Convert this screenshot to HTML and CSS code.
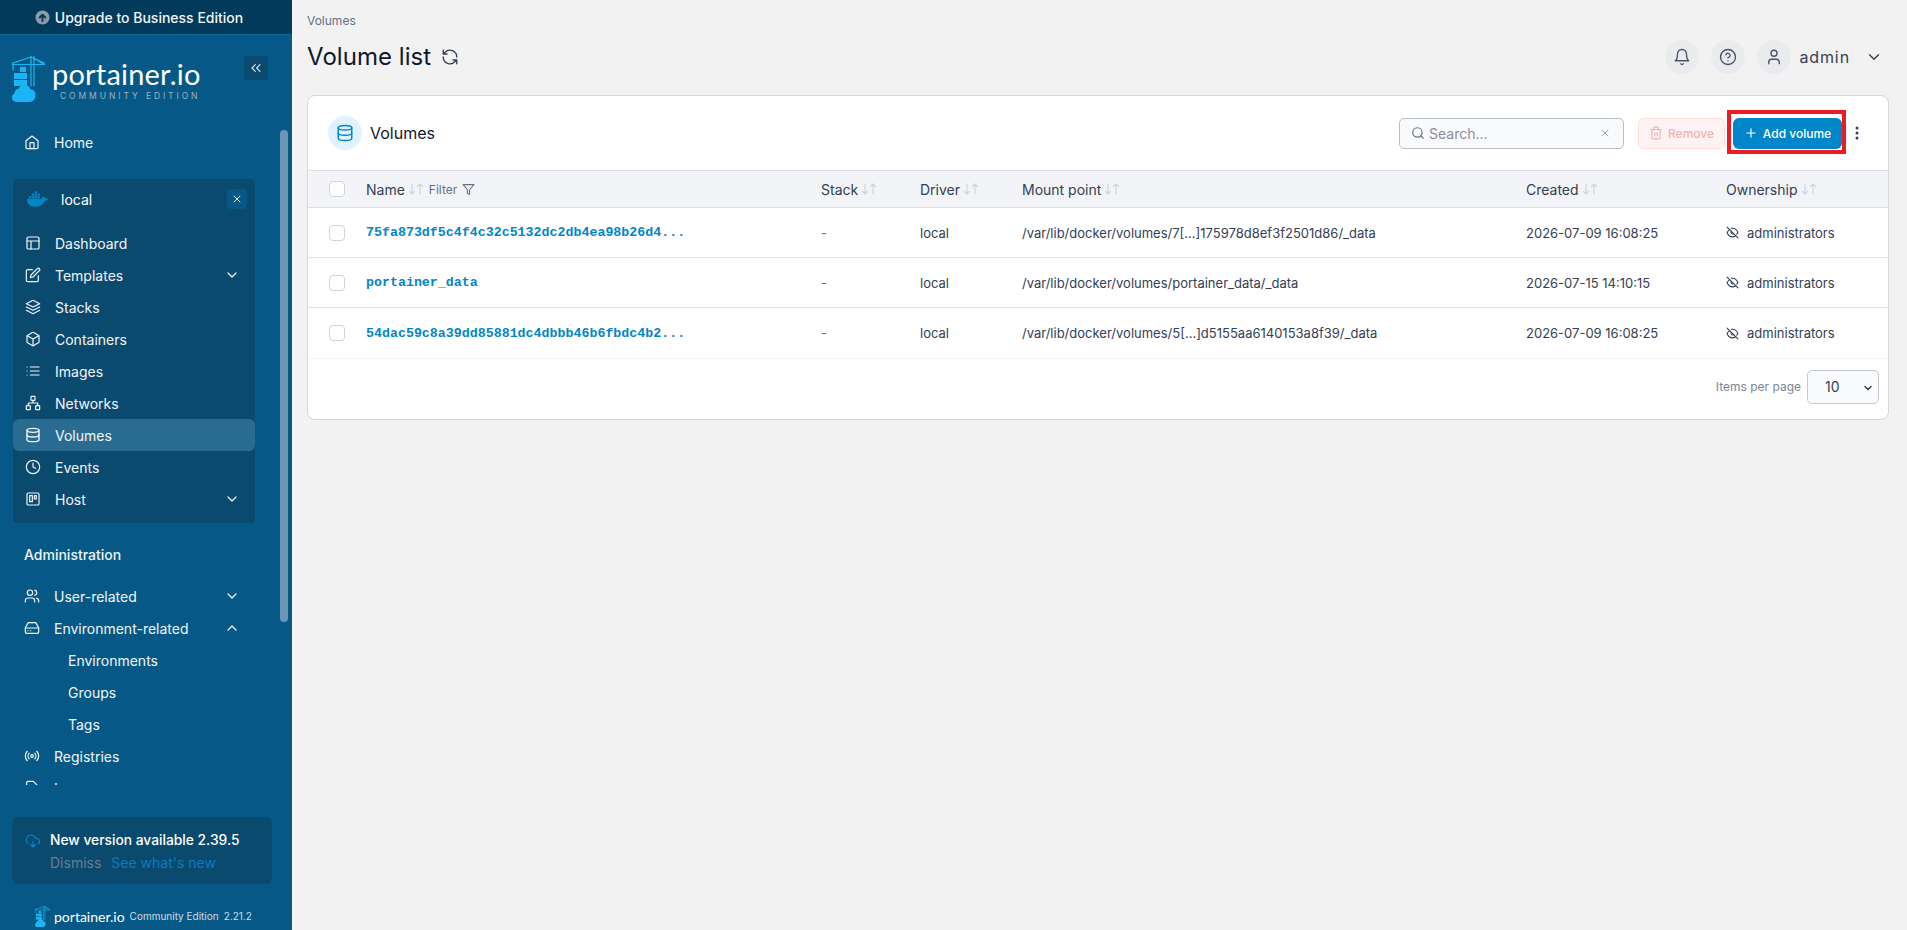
FILE: index.html
```html
<!DOCTYPE html>
<html lang="en">
<head>
<meta charset="utf-8">
<title>Volume list</title>
<link rel="stylesheet" href="styles.css">
</head>
<body>
<svg class="defs" width="0" height="0">
  <symbol id="i-db" viewBox="0 0 24 24"><ellipse cx="12" cy="5" rx="9" ry="3"/><path d="M3 5v14c0 1.7 4 3 9 3s9-1.300 9-3V5"/><path d="M3 12c0 1.700 4 3 9 3s9-1.300 9-3"/></symbol>
  <symbol id="i-eye" viewBox="0 0 24 24"><path d="M9.900 4.200A10 10 0 0 1 12 4c7 0 10 8 10 8a18 18 0 0 1-2.200 3.200"/><path d="M6.600 6.600C3.500 8.700 2 12 2 12s3 8 10 8a10 10 0 0 0 5.400-1.600"/><path d="M9.900 9.900a3 3 0 0 0 4.200 4.200"/><path d="m2 2 20 20"/></symbol>
  <symbol id="i-sort" viewBox="0 0 16 12"><path class="sort-line" d="M4 1v10M1.500 8.500 4 11l2.500-2.500M12 11V1M9.500 3.500 12 1l2.500 2.500"/></symbol>
  <symbol id="i-crane" viewBox="0 0 33 46"><path class="logo-line" d="M0 8.500h33M0 7.500 19 1l14 6.500M19 0v30M22 0v30M22 2l9 6M1 8v6"/><path class="logo-fill" d="M8 11h6v5H8zM2 17h13v6H2zM2 24h13v6H2z"/><path class="logo-fill" d="M5 46c-3 0-5-2-5-4.500 0-2 1-3.500 2.500-4C2.500 35 4 33 6.500 33c1-2.500 3-4 6-4 3.500 0 5.500 2 6 4.500 3 0 5 2 5 5 0 4-2 7.500-6 7.500z"/></symbol>
</svg>
<div class="app">
  <aside class="sidebar">
    <div class="upgrade"><svg class="upgrade-ic" viewBox="0 0 16 16"><circle cx="8" cy="8" r="7.500"/><path d="M8 12V5M5 8l3-3 3 3"/></svg><span>Upgrade to Business Edition</span></div>
    <div class="brand">
      <svg class="crane"><use href="#i-crane"/></svg>
      <div class="brand-text"><div class="brand-name">portainer.io</div><div class="brand-sub">COMMUNITY EDITION</div></div>
      <button class="collapse"><svg class="ic" viewBox="0 0 24 24"><path d="m11 17-5-5 5-5M18 17l-5-5 5-5"/></svg></button>
    </div>
    <nav class="nav">
      <a class="item"><svg class="ic" viewBox="0 0 24 24"><path d="m3 10 9-7 9 7v10a2 2 0 0 1-2 2H5a2 2 0 0 1-2-2z"/><path d="M9 22v-9h6v9"/></svg><span>Home</span></a>
      <section class="env">
        <div class="env-head">
          <svg class="whale" viewBox="0 0 24 16"><path d="M1 8h15.500c.2-1.500 1-2.500 2-3 .8.700 1.300 1.500 1.300 2.500 1-.4 2.200-.3 3.200.3-.8 1.500-2 2.200-3.600 2.200C18 13.500 14.500 16 9.500 16 4 16 1 13 1 8z"/><path d="M3 5h2.500v2.500H3zM6 5h2.500v2.500H6zM9 5h2.500v2.500H9zM12 5h2.500v2.500H12zM6 2.200h2.500v2.300H6zM9 2.200h2.500v2.300H9zM12 2.200h2.500v2.300H12zM9 0h2.500v1.800H9z"/></svg>
          <span class="env-name">local</span>
          <button class="env-x"><svg class="ic-sm" viewBox="0 0 24 24"><path d="M18 6 6 18M6 6l12 12"/></svg></button>
        </div>
        <a class="item sub"><svg class="ic" viewBox="0 0 24 24"><rect x="3" y="3" width="18" height="18" rx="2"/><path d="M3 9h18M9 21V9"/></svg><span>Dashboard</span></a>
        <a class="item sub"><svg class="ic" viewBox="0 0 24 24"><path d="M11 4H4a2 2 0 0 0-2 2v14a2 2 0 0 0 2 2h14a2 2 0 0 0 2-2v-7"/><path d="M18.500 2.500a2.100 2.100 0 0 1 3 3L12 15l-4 1 1-4z"/></svg><span>Templates</span><svg class="ic caret" viewBox="0 0 24 24"><path d="m6 9 6 6 6-6"/></svg></a>
        <a class="item sub"><svg class="ic" viewBox="0 0 24 24"><path d="m12 2 10 5-10 5L2 7z"/><path d="m2 12 10 5 10-5M2 17l10 5 10-5"/></svg><span>Stacks</span></a>
        <a class="item sub"><svg class="ic" viewBox="0 0 24 24"><path d="M21 16V8a2 2 0 0 0-1-1.700l-7-4a2 2 0 0 0-2 0l-7 4A2 2 0 0 0 3 8v8a2 2 0 0 0 1 1.700l7 4a2 2 0 0 0 2 0l7-4a2 2 0 0 0 1-1.700z"/><path d="M3.300 7 12 12l8.700-5M12 22V12"/></svg><span>Containers</span></a>
        <a class="item sub"><svg class="ic" viewBox="0 0 24 24"><path d="M8 6h13M8 12h13M8 18h13M3 6h.01M3 12h.01M3 18h.01"/></svg><span>Images</span></a>
        <a class="item sub"><svg class="ic" viewBox="0 0 24 24"><rect x="9" y="2" width="6" height="6" rx="1"/><rect x="2" y="16" width="6" height="6" rx="1"/><rect x="16" y="16" width="6" height="6" rx="1"/><path d="M5 16v-4h14v4M12 12V8"/></svg><span>Networks</span></a>
        <a class="item sub active"><svg class="ic"><use href="#i-db"/></svg><span>Volumes</span></a>
        <a class="item sub"><svg class="ic" viewBox="0 0 24 24"><circle cx="12" cy="12" r="10"/><path d="M12 6v6l4 2"/></svg><span>Events</span></a>
        <a class="item sub"><svg class="ic" viewBox="0 0 24 24"><rect x="3" y="3" width="18" height="18" rx="2"/><rect x="7" y="7" width="4" height="9"/><rect x="14" y="7" width="3" height="5"/></svg><span>Host</span><svg class="ic caret" viewBox="0 0 24 24"><path d="m6 9 6 6 6-6"/></svg></a>
      </section>
      <h2 class="nav-title">Administration</h2>
      <a class="item"><svg class="ic" viewBox="0 0 24 24"><path d="M16 21v-2a4 4 0 0 0-4-4H6a4 4 0 0 0-4 4v2"/><circle cx="9" cy="7" r="4"/><path d="M22 21v-2a4 4 0 0 0-3-3.900M16 3.100a4 4 0 0 1 0 7.800"/></svg><span>User-related</span><svg class="ic caret top-caret" viewBox="0 0 24 24"><path d="m6 9 6 6 6-6"/></svg></a>
      <a class="item"><svg class="ic" viewBox="0 0 24 24"><path d="M22 12H2"/><path d="M5.500 5.100 2 12v6a2 2 0 0 0 2 2h16a2 2 0 0 0 2-2v-6l-3.500-6.900A2 2 0 0 0 16.800 4H7.200a2 2 0 0 0-1.700 1.100z"/><path d="M6 16h.01M10 16h.01"/></svg><span>Environment-related</span><svg class="ic caret top-caret" viewBox="0 0 24 24"><path d="m18 15-6-6-6 6"/></svg></a>
      <a class="item child"><span>Environments</span></a>
      <a class="item child"><span>Groups</span></a>
      <a class="item child"><span>Tags</span></a>
      <a class="item"><svg class="ic" viewBox="0 0 24 24"><path d="M4.900 19.100C1 15.200 1 8.800 4.900 4.900M7.800 16.200c-2.300-2.300-2.300-6.100 0-8.500M16.200 7.800c2.300 2.300 2.300 6.100 0 8.500M19.100 4.900C23 8.800 23 15.100 19.100 19"/><circle cx="12" cy="12" r="2"/></svg><span>Registries</span></a>
      <a class="item"><svg class="ic" viewBox="0 0 24 24"><path d="M14 2H6a2 2 0 0 0-2 2v16a2 2 0 0 0 2 2h12a2 2 0 0 0 2-2V8z"/></svg><span>Logs</span></a>
      <div class="scrollbar"></div>
    </nav>
    <div class="update">
      <svg class="ic update-ic" viewBox="0 0 24 24"><path d="M12 13v8l-4-4M12 21l4-4"/><path d="M4.400 15.300A7 7 0 1 1 15.700 8h1.800a4.500 4.500 0 0 1 2.500 8.200"/></svg>
      <div class="update-body">
        <div class="update-title">New version available 2.39.5</div>
        <div class="update-links"><span class="dismiss">Dismiss</span><span class="whatsnew">See what's new</span></div>
      </div>
    </div>
    <div class="foot">
      <svg class="crane-sm"><use href="#i-crane"/></svg>
      <span class="foot-name">portainer.io</span>
      <span class="foot-ed">Community Edition</span>
      <span class="foot-ver">2.21.2</span>
    </div>
  </aside>

  <main class="main">
    <div class="crumb">Volumes</div>
    <header class="page-head">
      <h1>Volume list</h1>
      <svg class="ic refresh" viewBox="0 0 24 24"><path d="M21 12a9 9 0 0 0-15.500-6.300L3 8M3 3v5h5"/><path d="M3 12a9 9 0 0 0 15.500 6.300L21 16M21 21v-5h-5"/></svg>
      <div class="top-actions">
        <span class="round"><svg class="ic-top" viewBox="0 0 24 24"><path d="M6 8a6 6 0 0 1 12 0c0 7 3 9 3 9H3s3-2 3-9"/><path d="M10.300 21a2 2 0 0 0 3.400 0"/></svg></span>
        <span class="round"><svg class="ic-top" viewBox="0 0 24 24"><circle cx="12" cy="12" r="10"/><path d="M9.100 9a3 3 0 0 1 5.800 1c0 2-3 3-3 3M12 17h.01"/></svg></span>
        <span class="round"><svg class="ic-top" viewBox="0 0 24 24"><path d="M19 21v-2a4 4 0 0 0-4-4H9a4 4 0 0 0-4 4v2"/><circle cx="12" cy="7" r="4"/></svg></span>
        <span class="user">admin</span>
        <svg class="ic-top user-caret" viewBox="0 0 24 24"><path d="m6 9 6 6 6-6"/></svg>
      </div>
    </header>

    <section class="card">
      <div class="card-head">
        <span class="badge"><svg class="ic-badge"><use href="#i-db"/></svg></span>
        <h2 class="card-title">Volumes</h2>
        <div class="search">
          <svg class="ic-search" viewBox="0 0 24 24"><circle cx="11" cy="11" r="8"/><path d="m21 21-4.300-4.300"/></svg>
          <span class="search-ph">Search...</span>
          <svg class="ic-search-x" viewBox="0 0 24 24"><path d="M18 6 6 18M6 6l12 12"/></svg>
        </div>
        <button class="btn-remove"><svg class="ic-btn" viewBox="0 0 24 24"><path d="M3 6h18M19 6v14a2 2 0 0 1-2 2H7a2 2 0 0 1-2-2V6M8 6V4a2 2 0 0 1 2-2h4a2 2 0 0 1 2 2v2M10 11v6M14 11v6"/></svg>Remove</button>
        <div class="highlight-wrap">
          <button class="btn-add"><svg class="ic-btn" viewBox="0 0 24 24"><path d="M12 5v14M5 12h14"/></svg>Add volume</button>
          <span class="highlight"></span>
        </div>
        <svg class="dots" viewBox="0 0 4 16"><circle cx="2" cy="3" r="1.500"/><circle cx="2" cy="8" r="1.500"/><circle cx="2" cy="13" r="1.500"/></svg>
      </div>
      <table class="tbl">
        <colgroup><col class="c0"><col class="c1"><col class="c2"><col class="c3"><col class="c4"><col class="c5"><col class="c6"></colgroup>
        <thead>
          <tr>
            <th><span class="check"></span></th>
            <th><span class="th-in">Name<svg class="sort"><use href="#i-sort"/></svg><span class="filter">Filter</span><svg class="funnel" viewBox="0 0 24 24"><path d="M22 3H2l8 9.500V19l4 2v-8.500z"/></svg></span></th>
            <th><span class="th-in">Stack<svg class="sort"><use href="#i-sort"/></svg></span></th>
            <th><span class="th-in">Driver<svg class="sort"><use href="#i-sort"/></svg></span></th>
            <th><span class="th-in">Mount point<svg class="sort"><use href="#i-sort"/></svg></span></th>
            <th><span class="th-in">Created<svg class="sort"><use href="#i-sort"/></svg></span></th>
            <th><span class="th-in">Ownership<svg class="sort"><use href="#i-sort"/></svg></span></th>
          </tr>
        </thead>
        <tbody>
          <tr>
            <td><span class="check"></span></td>
            <td class="mono">75fa873df5c4f4c32c5132dc2db4ea98b26d4...</td>
            <td class="dash">-</td><td>local</td>
            <td>/var/lib/docker/volumes/7[...]175978d8ef3f2501d86/_data</td>
            <td>2026-07-09 16:08:25</td>
            <td><span class="owner"><svg class="ic-eye"><use href="#i-eye"/></svg>administrators</span></td>
          </tr>
          <tr>
            <td><span class="check"></span></td>
            <td class="mono">portainer_data</td>
            <td class="dash">-</td><td>local</td>
            <td>/var/lib/docker/volumes/portainer_data/_data</td>
            <td>2026-07-15 14:10:15</td>
            <td><span class="owner"><svg class="ic-eye"><use href="#i-eye"/></svg>administrators</span></td>
          </tr>
          <tr>
            <td><span class="check"></span></td>
            <td class="mono">54dac59c8a39dd85881dc4dbbb46b6fbdc4b2...</td>
            <td class="dash">-</td><td>local</td>
            <td>/var/lib/docker/volumes/5[...]d5155aa6140153a8f39/_data</td>
            <td>2026-07-09 16:08:25</td>
            <td><span class="owner"><svg class="ic-eye"><use href="#i-eye"/></svg>administrators</span></td>
          </tr>
        </tbody>
      </table>
      <div class="card-foot">
        <span class="per-page">Items per page</span>
        <span class="select">10<svg class="select-caret" viewBox="0 0 24 24"><path d="m6 9 6 6 6-6"/></svg></span>
      </div>
    </section>
  </main>
</div>
</body>
</html>
```

FILE: styles.css
```css
* { box-sizing: border-box; }
html, body { margin: 0; height: 100%; overflow: hidden; }
body { font-family: Inter, "Liberation Sans", sans-serif; color: #101828; background: #f2f2f3; }
.defs { position: absolute; }
symbol path, symbol ellipse { fill: none; stroke: currentColor; stroke-width: 2; stroke-linecap: round; stroke-linejoin: round; }
.app { display: flex; height: 930px; }

/* Sidebar */
.sidebar { width: 292px; flex: none; background: #065986; color: #fff; display: flex; flex-direction: column; height: 930px; }
.upgrade { height: 35px; flex: none; background: #023a5b; border-bottom: 1px solid #0a6a9c; display: flex; align-items: center; justify-content: center; gap: 5px; padding-right: 14px; font-size: 14px; font-weight: 500; color: #f2f6f9; }
.upgrade-ic { width: 15px; height: 15px; }
.upgrade-ic circle { fill: #8a9bab; }
.upgrade-ic path { fill: none; stroke: #023a5b; stroke-width: 2; stroke-linecap: round; stroke-linejoin: round; }
.brand { height: 83px; flex: none; display: flex; padding: 21px 24px 0 12px; }
.crane { width: 33px; height: 46px; flex: none; color: #19b5f5; }
symbol path.logo-line { stroke-width: 1.200; }
symbol path.logo-fill { fill: #19b5f5; stroke: none; }
symbol path.sort-line { stroke-width: 1.200; }
.brand-text { margin-left: 7px; flex: 1; }
.brand-name { font-family: Lato, sans-serif; font-size: 29px; line-height: 30px; margin-top: 3px; letter-spacing: .2px; color: #fff; }
.brand-sub { font-size: 8.500px; line-height: 12px; letter-spacing: 2.900px; margin-left: 8px; margin-top: 1px; color: #9db2c2; }
.collapse { width: 24px; height: 24px; border: 0; padding: 0; border-radius: 4px; background: #0b4a6f; color: #d5e2ea; display: flex; align-items: center; justify-content: center; }
.ic { width: 16px; height: 16px; flex: none; fill: none; stroke: currentColor; stroke-width: 1.800; stroke-linecap: round; stroke-linejoin: round; }
.ic-sm { width: 12px; height: 12px; fill: none; stroke: currentColor; stroke-width: 2; stroke-linecap: round; }
.nav { height: 667px; flex: none; padding: 8px 0 0; overflow: hidden; position: relative; }
.item { display: flex; align-items: center; height: 32px; padding-left: 23px; font-size: 14px; color: #f2f6f9; }
.item > span { margin-left: 14px; }
.nav > .item > .ic:first-child { margin-left: 1px; }
.env { width: 242px; height: 344px; margin: 21px 0 0 13px; background: #0b4a6f; border-radius: 4px; }
.env-head { height: 48px; display: flex; align-items: center; padding: 0 0 8px 13px; }
.whale { width: 23px; height: 16px; fill: #0086c9; flex: none; }
.env-name { margin-left: 12px; font-size: 14px; font-weight: 400; flex: 1; }
.env-x { width: 20px; height: 20px; border: 0; padding: 0; margin-right: 8px; border-radius: 4px; background: #065986; color: #dfe9ef; display: flex; align-items: center; justify-content: center; }
.sub { border-radius: 6px; padding-left: 12px; position: relative; }
.sub > span { margin-left: 14px; }
.active { background: #2a6b91; }
.caret { margin-left: auto; }
.env .caret { margin-right: 15px; }
.top-caret { margin-right: 52px; }
.nav-title { margin: 21px 0 0 24px; height: 36px; font-size: 14px; font-weight: 500; line-height: 22px; color: #eef3f7; }
.item.child { padding-left: 54px; }
.item.child > span { margin-left: 14px; }
.scrollbar { position: absolute; left: 280px; top: 12px; width: 8px; height: 492px; border-radius: 4px; background: #6a98b4; }
.update { margin: 32px 0 0 12px; width: 260px; height: 67px; flex: none; border-radius: 6px; background: #0b4a6f; display: flex; padding: 13px 0 0 13px; }
.update-ic { width: 16px; height: 16px; color: #0086c9; margin-top: 3px; }
.update-body { margin-left: 9px; }
.update-title { font-size: 13.800px; font-weight: 500; line-height: 20px; color: #fff; }
.update-links { display: flex; gap: 10px; margin-top: 3px; font-size: 14px; line-height: 20px; }
.dismiss { color: #667f91; }
.whatsnew { color: #0b79bd; }
.foot { flex: 1; display: flex; align-items: center; padding: 18px 0 0 35px; }
.crane-sm { width: 15px; height: 21px; flex: none; color: #19b5f5; }
.foot-name { margin-left: 4px; font-family: Lato, sans-serif; font-size: 14px; color: #fff; }
.foot-ed { margin-left: 5px; font-size: 10px; color: #cfdce5; }
.foot-ver { margin-left: 5px; font-size: 10px; color: #cfdce5; }

/* Main */
.main { flex: 1; min-width: 0; padding: 14px 18px 0 15px; }
.crumb { font-size: 12px; line-height: 14px; color: #667085; }
.page-head { height: 67px; display: flex; align-items: center; padding-bottom: 9px; }
.page-head h1 { margin: 0; font-size: 24px; font-weight: 400; line-height: 30px; letter-spacing: .05px; color: #101828; }
.refresh { margin-left: 10px; color: #344054; width: 18px; height: 18px; }
.top-actions { margin-left: auto; display: flex; align-items: center; }
.round { width: 34px; height: 34px; border-radius: 50%; background: #e9ebef; display: flex; align-items: center; justify-content: center; margin-left: 12px; color: #475467; }
.ic-top { width: 18px; height: 18px; fill: none; stroke: currentColor; stroke-width: 1.800; stroke-linecap: round; stroke-linejoin: round; }
.user { margin-left: 8px; font-size: 16px; letter-spacing: .9px; color: #344054; }
.user-caret { margin-left: 15px; margin-right: 6px; color: #344054; }
.card { background: #fff; border: 1px solid #d4d6e0; border-radius: 8px; height: 325px; overflow: hidden; display: flex; flex-direction: column; }
.card-head { height: 74px; flex: none; display: flex; align-items: center; padding: 0 29px 0 20px; }
.badge { width: 34px; height: 34px; border-radius: 50%; background: #e0f2fe; display: flex; align-items: center; justify-content: center; flex: none; color: #0086c9; }
.ic-badge { width: 18px; height: 18px; }
.card-title { margin: 0 0 0 8px; font-size: 16px; font-weight: 400; color: #101828; }
.search { margin-left: auto; width: 225px; height: 31px; border: 1px solid #b8bdc6; border-radius: 5px; background: #f9fafb; display: flex; align-items: center; padding: 0 12px 0 11px; }
.ic-search { width: 14px; height: 14px; fill: none; stroke: #667085; stroke-width: 2; stroke-linecap: round; }
.search-ph { margin-left: 4px; font-size: 14px; color: #8a8f99; flex: 1; }
.ic-search-x { width: 12px; height: 12px; fill: none; stroke: #98a2b3; stroke-width: 2; stroke-linecap: round; }
.btn-remove, .btn-add { height: 31px; border-radius: 6px; font: 500 12px Inter, sans-serif; display: flex; align-items: center; gap: 5px; }
.ic-btn { width: 14px; height: 14px; fill: none; stroke: currentColor; stroke-width: 2; stroke-linecap: round; stroke-linejoin: round; }
.btn-remove { margin-left: 14px; width: 87px; justify-content: center; background: #fef3f2; border: 1px solid #fedbd7; color: #f0b5ae; }
.highlight-wrap { margin-left: 8px; position: relative; display: flex; }
.btn-add { width: 109px; justify-content: center; background: #0086c9; border: 0; color: #fff; }
.highlight { position: absolute; left: -6px; right: -4px; top: -8px; bottom: -5px; border: 4px solid #ed1c24; pointer-events: none; }
.dots { width: 4px; height: 16px; margin-left: 13px; fill: #344054; }

.tbl { width: 100%; border-collapse: collapse; table-layout: fixed; font-size: 13px; color: #344054; }
.c0 { width: 58px; } .c1 { width: 455px; } .c2 { width: 99px; } .c3 { width: 102px; } .c4 { width: 504px; } .c5 { width: 200px; }
.tbl th { height: 37px; padding: 0; background: #f2f4f7; border-top: 1px solid #dcdee5; border-bottom: 1px solid #dcdee5; text-align: left; font-size: 14px; font-weight: 400; color: #344054; }
.th-in { display: flex; align-items: center; }
.sort { width: 16px; height: 12px; margin-left: 3px; color: #d0d5dd; fill: none; }
.filter { margin-left: 5px; font-size: 12px; color: #667085; }
.funnel { width: 13px; height: 13px; margin-left: 5px; fill: none; stroke: #667085; stroke-width: 2; stroke-linejoin: round; }
.tbl td { height: 50px; padding: 0; border-bottom: 1px solid #e0e2e7; white-space: nowrap; }
.tbl tbody tr:last-child td { height: 51px; border-bottom-color: #f2f4f7; }
.check { display: block; width: 16px; height: 16px; margin-left: 21px; border: 1px solid #d0d5dd; border-radius: 4px; background: #fff; }
.mono { font-family: "Liberation Mono", monospace; font-weight: 700; font-size: 13.300px; color: #0086c9; }
.dash { color: #667085; }
.owner { display: flex; align-items: center; gap: 8px; }
.ic-eye { width: 13px; height: 13px; color: #344054; }
.card-foot { flex: 1; display: flex; align-items: center; justify-content: flex-end; padding: 0 9px 5px 0; }
.per-page { font-size: 12px; color: #7d8695; margin-right: 6px; }
.select { width: 72px; height: 34px; border: 1px solid #c5c9d1; border-radius: 5px; background: #f9fafb; display: flex; align-items: center; padding-left: 17px; font-size: 14px; color: #344054; position: relative; }
.select-caret { width: 12px; height: 12px; position: absolute; right: 4px; top: 11px; fill: none; stroke: #344054; stroke-width: 3; stroke-linecap: round; stroke-linejoin: round; }
```
